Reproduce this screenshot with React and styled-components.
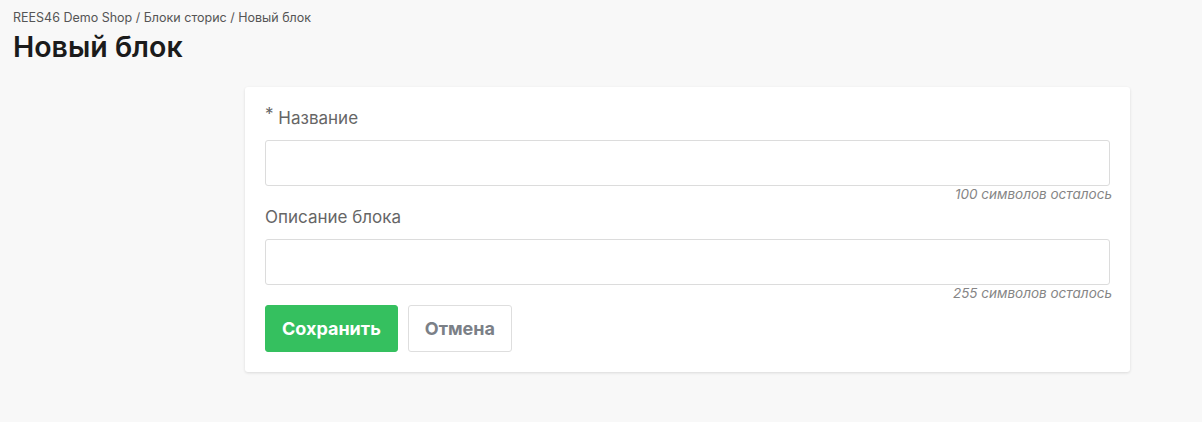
import React from "react";
import styled, { createGlobalStyle } from "styled-components";

const GlobalStyle = createGlobalStyle`
  html, body {
    margin: 0;
    padding: 0;
    background: #f8f8f8;
    font-family: Inter, "Noto Sans", sans-serif;
  }
`;

function App() {
  return (
    <Page>
      <GlobalStyle />
      <Breadcrumbs>REES46 Demo Shop / Блоки сторис / Новый блок</Breadcrumbs>
      <Title>Новый блок</Title>
      <Card>
        <Field>
          <Label>
            <Req>*</Req> Название
          </Label>
          <Input />
          <Hint>100 символов осталось</Hint>
        </Field>
        <Field>
          <Label>Описание блока</Label>
          <Input />
          <Hint>255 символов осталось</Hint>
        </Field>
        <Actions>
          <Button primary>Сохранить</Button>
          <Button>Отмена</Button>
        </Actions>
      </Card>
    </Page>
  );
}

export default App;

const Page = styled.div`
  padding: 10px 13px 40px;
  min-height: 422px;
  box-sizing: border-box;
`;

const Breadcrumbs = styled.div`
  font-size: 12.5px;
  line-height: 16px;
  color: #555;
`;

const Title = styled.h1`
  margin: 4px 0 0;
  font-size: 28.5px;
  line-height: 34px;
  font-weight: 600;
  color: #1b1b1b;
`;

const Card = styled.div`
  margin: 23px 0 0 232px;
  width: 885px;
  box-sizing: border-box;
  background: #fff;
  border-radius: 3px;
  box-shadow: 0 1px 3px rgba(0, 0, 0, 0.12);
  padding: 19px 20px 20px;
`;

const Field = styled.div`
  display: flex;
  flex-direction: column;
`;

const Label = styled.label`
  font-size: 17px;
  line-height: 24px;
  color: #666;
  margin-bottom: 10px;
`;

const Req = styled.span`
  font-size: 17px;
  position: relative;
  top: -4px;
`;

const Input = styled.input`
  height: 46px;
  box-sizing: border-box;
  border: 1px solid #dcdcdc;
  border-radius: 3px;
  background: #fff;
  font-family: inherit;
  font-size: 15px;
  padding: 0 12px;
  outline: none;
`;

const Hint = styled.div`
  align-self: flex-end;
  margin-right: -2px;
  font-size: 13.5px;
  line-height: 16px;
  font-style: italic;
  color: #858585;
  margin-bottom: 3px;
`;

const Actions = styled.div`
  display: flex;
  gap: 10px;
  margin-top: 1px;
`;

const Button = styled.button`
  height: 47px;
  padding: 0 16px;
  box-sizing: border-box;
  border-radius: 3px;
  font-family: inherit;
  font-size: 18px;
  font-weight: 700;
  cursor: pointer;
  border: 1px solid ${(p) => (p.primary ? "#35c05f" : "#dedede")};
  background: ${(p) => (p.primary ? "#35c05f" : "#fff")};
  color: ${(p) => (p.primary ? "#fff" : "#7b8087")};
`;
